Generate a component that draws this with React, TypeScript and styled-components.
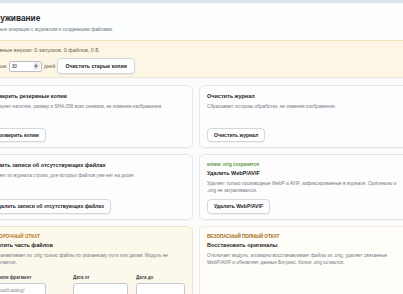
import React from "react";
import styled, { createGlobalStyle } from "styled-components";

const GlobalStyle = createGlobalStyle`
  html, body { margin: 0; padding: 0; }
  body {
    background: #fbfbfc;
    overflow: hidden;
    font-family: "Liberation Sans", Arial, sans-serif;
    color: #1f2328;
  }
  * { box-sizing: border-box; }
`;

const Page = styled.div`
  display: flex;
  flex-direction: column;
  width: 470px;
  margin-left: -28px;
`;

const TopBar = styled.div`
  height: 3px;
  background: #dde4e7;
`;

const Header = styled.header`
  height: 37px;
  background: #fdfefe;
  padding: 10px 9px 0 7px;
`;

const Title = styled.h1`
  margin: 0;
  font-size: 8.3px;
  line-height: 10px;
  font-weight: 700;
  color: #1f2328;
`;

const Subtitle = styled.p`
  margin: 3.5px 0 0 2px;
  font-size: 4.8px;
  line-height: 6px;
  color: #6b7280;
`;

const Notice = styled.section`
  height: 38px;
  background: #fdf6e4;
  border-top: 1px solid #f3e3b8;
  border-bottom: 1px solid #e9e5da;
  padding: 6px 9px 0 1px;
`;

const NoticeText = styled.p`
  margin: 0 0 0 12px;
  font-size: 5.4px;
  line-height: 6px;
  color: #6f6449;
`;

const RetentionRow = styled.div`
  display: flex;
  align-items: center;
  gap: 2px;
  margin-top: 5px;
  font-size: 5.2px;
  color: #6f6449;
`;

const NumberBox = styled.div`
  display: flex;
  align-items: center;
  justify-content: space-between;
  width: 33px;
  height: 11px;
  margin-left: 0;
  padding: 0 1px 0 2px;
  border: 1px solid #b9c0c7;
  border-radius: 2px;
  background: #fff;
  font-size: 4.8px;
  color: #1f2328;
`;

const Spinner = styled.span`
  display: flex;
  flex-direction: column;
  align-items: center;
  justify-content: center;
  width: 7px;
  height: 8px;
  border-radius: 1px;
  background: #eef0f2;
`;

const Button = styled.button<{ $tall?: boolean }>`
  display: inline-flex;
  align-items: center;
  align-self: flex-start;
  height: ${(p) => (p.$tall ? "16px" : "14.5px")};
  padding: 0 ${(p) => (p.$tall ? "7px" : "6px")};
  border: 1px solid #d3d8de;
  border-radius: 4px;
  background: #fefefe;
  box-shadow: 0 1px 1px rgba(16, 24, 40, 0.06);
  font-family: inherit;
  font-size: ${(p) => (p.$tall ? "5.2px" : "5.1px")};
  font-weight: 700;
  color: #1f2328;
  white-space: nowrap;
`;

const Grid = styled.div`
  display: grid;
  grid-template-columns: 213px 213px;
  gap: 6px;
  margin: 7px 0 0 8px;
`;

type Tone = "plain" | "warn" | "safe";

const toneBg: Record<Tone, string> = {
  plain: "#fdfdfd",
  warn: "#fcf8ec",
  safe: "#fefdf8",
};
const toneBorder: Record<Tone, string> = {
  plain: "#e5e7ea",
  warn: "#eee4c8",
  safe: "#f0ebdc",
};

const Card = styled.article<{ $tone: Tone }>`
  display: flex;
  flex-direction: column;
  min-height: 63px;
  padding: 7px 7px 5px;
  border: 1px solid ${(p) => toneBorder[p.$tone]};
  border-radius: 5px;
  background: ${(p) => toneBg[p.$tone]};
  box-shadow: 0 1px 1px rgba(16, 24, 40, 0.03);

  & > ${Button} {
    margin-top: auto;
  }
`;

const Tag = styled.div<{ $color: string }>`
  margin-bottom: 3px;
  font-size: 4.6px;
  line-height: 5px;
  font-weight: 600;
  color: ${(p) => p.$color};
`;

const CardTitle = styled.h2`
  margin: 0;
  font-size: 5.5px;
  line-height: 7px;
  font-weight: 700;
  color: #1f2328;
`;

const CardText = styled.p`
  margin: 3px 0 5px;
  font-size: 4.7px;
  line-height: 7px;
  color: #737a85;
`;

const Fields = styled.div`
  display: grid;
  grid-template-columns: 77px 55px 1fr;
  gap: 8px;
  margin-top: 9px;
`;

const Field = styled.label`
  display: flex;
  flex-direction: column;
  gap: 3.5px;
`;

const FieldLabel = styled.span`
  font-size: 4.5px;
  line-height: 5px;
  font-weight: 700;
  color: #3d4249;
`;

const TextInput = styled.input<{ $w?: number }>`
  width: ${(p) => (p.$w ? `${p.$w}px` : "100%")};
  height: 14px;
  padding: 0 3px;
  border: 1px solid #c4c9cf;
  border-radius: 3px;
  background: #fff;
  font-family: inherit;
  font-size: 4.6px;
  color: #1f2328;
  &::placeholder { color: #8a9098; }
`;

const Arrow = ({ up }: { up?: boolean }) => (
  <svg width="4" height="3" viewBox="0 0 4 3">
    <path d={up ? "M0 3 L2 0.5 L4 3 Z" : "M0 0 L2 2.5 L4 0 Z"} fill="#8b9198" />
  </svg>
);

export default function App() {
  return (
    <>
      <GlobalStyle />
      <Page>
        <TopBar />
        <Header>
          <Title>Обслуживание</Title>
          <Subtitle>Служебные операции с журналом и созданными файлами.</Subtitle>
        </Header>
        <Notice>
          <NoticeText>Резервные версии: 0 запусков, 0 файлов, 0 Б</NoticeText>
          <RetentionRow>
            <span>Копии старше</span>
            <NumberBox>
              <span>30</span>
              <Spinner>
                <Arrow up />
                <Arrow />
              </Spinner>
            </NumberBox>
            <span>дней</span>
            <Button type="button" $tall>
              Очистить старые копии
            </Button>
          </RetentionRow>
        </Notice>
        <Grid>
          <Card $tone="plain">
            <CardTitle>Проверить резервные копии</CardTitle>
            <CardText>Проверяет наличие, размер и SHA-256 всех снимков, не изменяя изображения.</CardText>
            <Button type="button">Проверить копии</Button>
          </Card>
          <Card $tone="plain">
            <CardTitle>Очистить журнал</CardTitle>
            <CardText>Сбрасывает историю обработки, не изменяя изображения.</CardText>
            <Button type="button">Очистить журнал</Button>
          </Card>
          <Card $tone="plain">
            <CardTitle>Удалить записи об отсутствующих файлах</CardTitle>
            <CardText>Удаляет из журнала строки, для которых файлов уже нет на диске.</CardText>
            <Button type="button">Удалить записи об отсутствующих файлах</Button>
          </Card>
          <Card $tone="plain">
            <Tag $color="#5a9640">копии .orig сохранятся</Tag>
            <CardTitle>Удалить WebP/AVIF</CardTitle>
            <CardText>
              Удаляет только производные WebP и AVIF, зафиксированные в журнале. Оригиналы и .orig не затрагиваются.
            </CardText>
            <Button type="button">Удалить WebP/AVIF</Button>
          </Card>
          <Card $tone="warn">
            <Tag $color="#b7791f">ВЫБОРОЧНЫЙ ОТКАТ</Tag>
            <CardTitle>Откатить часть файлов</CardTitle>
            <CardText style={{ marginBottom: 0 }}>
              Восстанавливает из .orig только файлы по указанному пути или датам. Модуль не отключается.
            </CardText>
            <Fields>
              <Field>
                <FieldLabel>Путь или фрагмент</FieldLabel>
                <TextInput $w={58} placeholder="/upload/catalog/" />
              </Field>
              <Field>
                <FieldLabel>Дата от</FieldLabel>
                <TextInput />
              </Field>
              <Field>
                <FieldLabel>Дата до</FieldLabel>
                <TextInput />
              </Field>
            </Fields>
          </Card>
          <Card $tone="safe">
            <Tag $color="#a36a12">БЕЗОПАСНЫЙ ПОЛНЫЙ ОТКАТ</Tag>
            <CardTitle>Восстановить оригиналы</CardTitle>
            <CardText>
              Отключает модуль, атомарно восстанавливает файлы из .orig, удаляет связанные WebP/AVIF и обновляет данные Битрикс. Копии .orig остаются.
            </CardText>
          </Card>
        </Grid>
      </Page>
    </>
  );
}
